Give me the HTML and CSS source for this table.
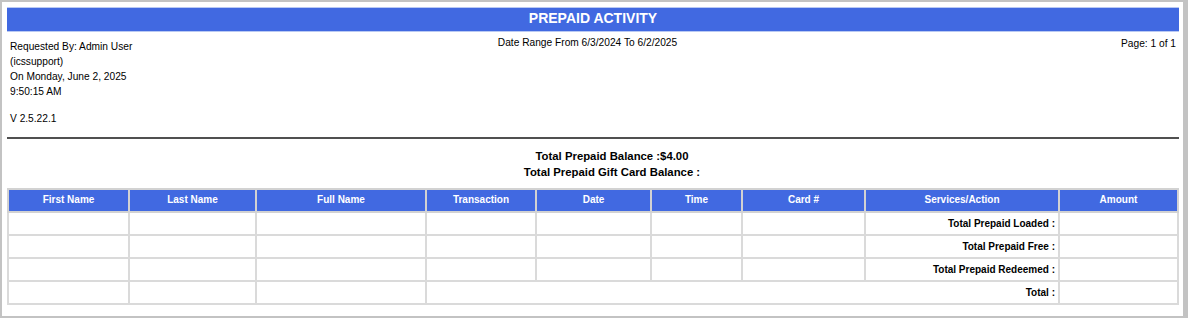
FILE: index.html
```html
<!DOCTYPE html>
<html>
<head>
<meta charset="utf-8">
<title>Prepaid Activity</title>
<link rel="stylesheet" href="styles.css">
</head>
<body>
<div class="page">
  <div class="title">PREPAID ACTIVITY</div>
  <div class="header">
    <div class="hdr-left">
      <div>Requested By: Admin User</div>
      <div>(icssupport)</div>
      <div>On Monday, June 2, 2025</div>
      <div>9:50:15 AM</div>
      <div class="version">V 2.5.22.1</div>
    </div>
    <div class="hdr-center">Date Range From 6/3/2024 To 6/2/2025</div>
    <div class="hdr-right">Page: 1 of 1</div>
  </div>
  <div class="totals">
    <div>Total Prepaid Balance :$4.00</div>
    <div>Total Prepaid Gift Card Balance :</div>
  </div>
  <table class="report">
    <colgroup>
      <col class="c1"><col class="c2"><col class="c3"><col class="c4"><col class="c5"><col class="c6"><col class="c7"><col class="c8"><col class="c9">
    </colgroup>
    <thead>
      <tr>
        <th>First Name</th><th>Last Name</th><th>Full Name</th><th>Transaction</th><th>Date</th><th>Time</th><th>Card #</th><th>Services/Action</th><th>Amount</th>
      </tr>
    </thead>
    <tbody>
      <tr><td></td><td></td><td></td><td></td><td></td><td></td><td></td><td class="lbl">Total Prepaid Loaded :</td><td></td></tr>
      <tr><td></td><td></td><td></td><td></td><td></td><td></td><td></td><td class="lbl">Total Prepaid Free :</td><td></td></tr>
      <tr><td></td><td></td><td></td><td></td><td></td><td></td><td></td><td class="lbl">Total Prepaid Redeemed :</td><td></td></tr>
      <tr><td></td><td></td><td></td><td colspan="5" class="lbl">Total :</td><td></td></tr>
    </tbody>
  </table>
</div>
</body>
</html>
```

FILE: styles.css
```css
html, body {
  margin: 0;
  padding: 0;
}
body {
  background: #c3c3c3;
  font-family: "Liberation Sans", Arial, sans-serif;
  font-size: 10.2px;
  line-height: 15px;
  color: #000;
}
.page {
  box-sizing: border-box;
  width: 1181px;
  height: 314px;
  margin: 2px 0 0 2px;
  padding: 5px 4px 0 5px;
  background: #fff;
}
.title {
  height: 21px;
  padding-bottom: 2px;
  line-height: 21px;
  background: #4169e1;
  border-top: 1px solid #b9c9f3;
  border-bottom: 1px solid #b9c9f3;
  color: #fff;
  font-weight: bold;
  font-size: 14px;
  text-align: center;
}
.header {
  display: flex;
  height: 105px;
  border-bottom: 2px solid #505050;
  box-sizing: content-box;
}
.hdr-left {
  flex: 1;
  padding: 7px 0 0 3px;
}
.version {
  margin-top: 12px;
}
.hdr-center {
  flex: 1;
  text-align: center;
  padding: 3px 11px 0 0;
}
.hdr-right {
  flex: 1;
  text-align: right;
  padding: 4px 3px 0 0;
}
.totals {
  padding: 9px 0 8px 38px;
  text-align: center;
  font-weight: bold;
  font-size: 11.35px;
  line-height: 16px;
}
.report {
  width: 1170px;
  table-layout: fixed;
  border-collapse: collapse;
  border: 2px solid #dadada;
}
.c1 { width: 121px; }
.c2 { width: 127px; }
.c3 { width: 170px; }
.c4 { width: 110px; }
.c5 { width: 115px; }
.c6 { width: 91px; }
.c7 { width: 123px; }
.c8 { width: 194px; }
.c9 { width: 119px; }
.report th,
.report td {
  border: 2px solid #dadada;
  height: 21px;
  padding: 0 3px;
  font-size: 10px;
  font-weight: bold;
  line-height: 15px;
}
.report th {
  background: #4169e1;
  color: #fff;
  text-align: center;
  border-color: #d2d2d2;
  padding-bottom: 2px;
  height: 19px;
}
.report td.lbl {
  text-align: right;
}
```
